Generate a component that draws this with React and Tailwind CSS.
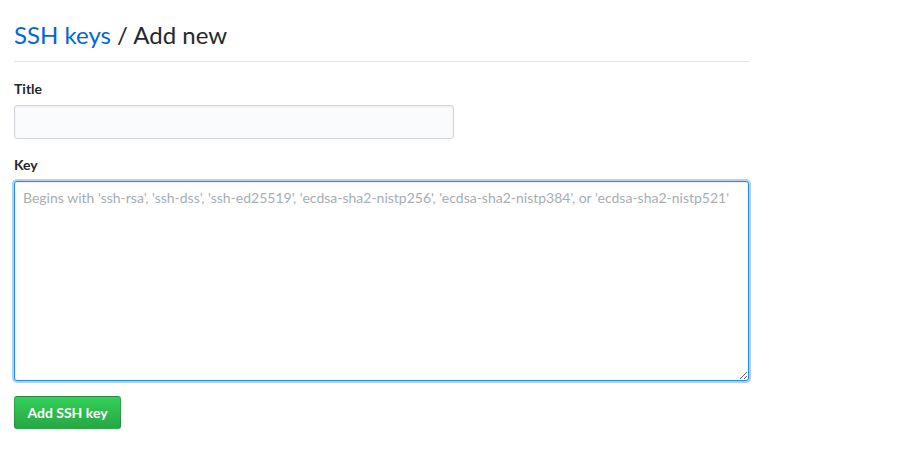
import React from 'react';

const App = () => {
  return (
    <div className="min-h-screen bg-white px-[14px] pt-[17px] text-[#24292e]" style={{ fontFamily: 'Lato, "Noto Sans", sans-serif' }}>
      <div className="w-[735px]">
        <h2 className="text-[24px] leading-[36px] font-normal pb-[8px] border-b border-[#e1e4e8]">
          <a href="#" className="text-[#0366d6]">SSH keys</a> / Add new
        </h2>

        <form className="mt-[16px]" onSubmit={(e) => e.preventDefault()}>
          <div className="mb-[15px]">
            <label className="block text-[14px] leading-[21px] font-bold mb-[6px]">Title</label>
            <input
              type="text"
              className="block w-[440px] h-[34px] px-[8px] text-[14px] bg-[#fafbfc] border border-[#d1d5da] rounded-[3px] shadow-[inset_0_1px_2px_rgba(27,31,35,0.075)] outline-none"
            />
          </div>

          <div>
            <label className="block text-[14px] leading-[21px] font-bold mb-[6px]">Key</label>
            <textarea
              placeholder="Begins with 'ssh-rsa', 'ssh-dss', 'ssh-ed25519', 'ecdsa-sha2-nistp256', 'ecdsa-sha2-nistp384', or 'ecdsa-sha2-nistp521'"
              className="block w-[735px] h-[200px] px-[8px] py-[6px] text-[14px] leading-[20px] bg-white border border-[#2188ff] rounded-[3px] shadow-[inset_0_1px_2px_rgba(27,31,35,0.075),0_0_0_2px_rgba(3,102,214,0.3)] outline-none placeholder:text-[#a8aeb4]"
            />
          </div>

          <button
            type="submit"
            className="block mt-[15px] w-[107px] h-[33px] text-[14px] leading-[20px] font-bold text-white rounded-[3px] border border-[rgba(27,31,35,0.2)] bg-gradient-to-b from-[#34d058] to-[#28a745]"
          >
            Add SSH key
          </button>
        </form>
      </div>
    </div>
  );
};

export default App;
